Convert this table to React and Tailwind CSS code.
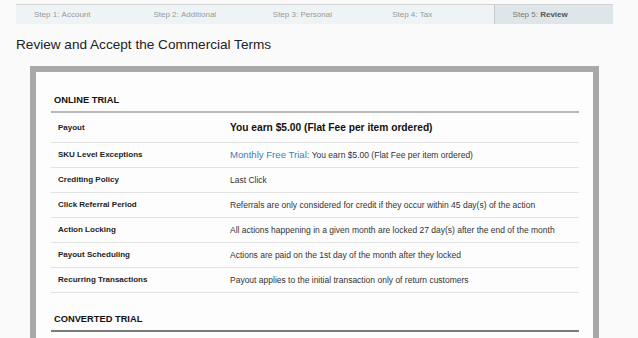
import React from 'react';

const steps = [
  { label: 'Step 1:', name: 'Account' },
  { label: 'Step 2:', name: 'Additional' },
  { label: 'Step 3:', name: 'Personal' },
  { label: 'Step 4:', name: 'Tax' },
  { label: 'Step 5:', name: 'Review', active: true },
];

const onlineTrial = [
  { label: 'Payout', value: <span className="text-[10.2px] font-bold text-[#111]">You earn $5.00 (Flat Fee per item ordered)</span>, tall: true },
  {
    label: 'SKU Level Exceptions',
    value: (
      <span>
        <span className="text-[9.6px] text-[#3f7dbd]">Monthly Free Trial:</span> You earn $5.00 (Flat Fee per item ordered)
      </span>
    ),
  },
  { label: 'Crediting Policy', value: 'Last Click' },
  { label: 'Click Referral Period', value: 'Referrals are only considered for credit if they occur within 45 day(s) of the action' },
  { label: 'Action Locking', value: 'All actions happening in a given month are locked 27 day(s) after the end of the month' },
  { label: 'Payout Scheduling', value: 'Actions are paid on the 1st day of the month after they locked' },
  { label: 'Recurring Transactions', value: 'Payout applies to the initial transaction only of return customers' },
];

function Section({ title, rows = [], line, top = 'pt-[22px]' }) {
  return (
    <div>
      <div className={`${top} pb-[5px] pl-[3px] border-b-2 ${line}`}>
        <p className="text-[9.3px] leading-[12px] font-bold text-[#111]">{title}</p>
      </div>
      {rows.map((row) => (
        <div
          key={row.label}
          className={`grid grid-cols-[172px_1fr] items-center pl-[7px] border-b border-[#e4e4e4] ${row.tall ? 'h-[30px]' : 'h-[25px]'}`}
        >
          <span className="text-[8px] font-bold text-[#222]">{row.label}</span>
          <span className="text-[8.5px] text-[#333]">{row.value}</span>
        </div>
      ))}
    </div>
  );
}

export default function App() {
  return (
    <div className="h-[338px] w-[638px] overflow-hidden bg-[#fafafa] font-['Liberation_Sans',Arial,sans-serif]">
      <div className="pt-[4px]">
        <div className="ml-4 grid w-[597px] grid-cols-5 border-t border-[#d2d2d2] bg-[#eef3f5]">
          {steps.map((s) => (
            <div
              key={s.label}
              className={`flex h-[19px] items-center pl-[18px] text-[8px] ${s.active ? 'border-l border-[#c9c9c9] bg-[#dfe6e9] text-[#777]' : 'text-[#999]'}`}
            >
              {s.label}&nbsp;<span className={s.active ? 'font-bold text-[#555]' : ''}>{s.name}</span>
            </div>
          ))}
        </div>
      </div>

      <h1 className="ml-4 mt-[13px] text-[13.6px] leading-[16px] text-[#222]">Review and Accept the Commercial Terms</h1>

      <div className="ml-[30px] mt-[13px] w-[569px] border-[6px] border-b-0 border-[#a8a8a8] bg-[#fdfdfd] pl-[15px] pr-[14px] pb-10">
        <Section title="ONLINE TRIAL" rows={onlineTrial} line="border-[#b9b9b9]" />
        <Section title="CONVERTED TRIAL" line="border-[#7a7a7a]" top="pt-[20px]" />
      </div>
    </div>
  );
}
